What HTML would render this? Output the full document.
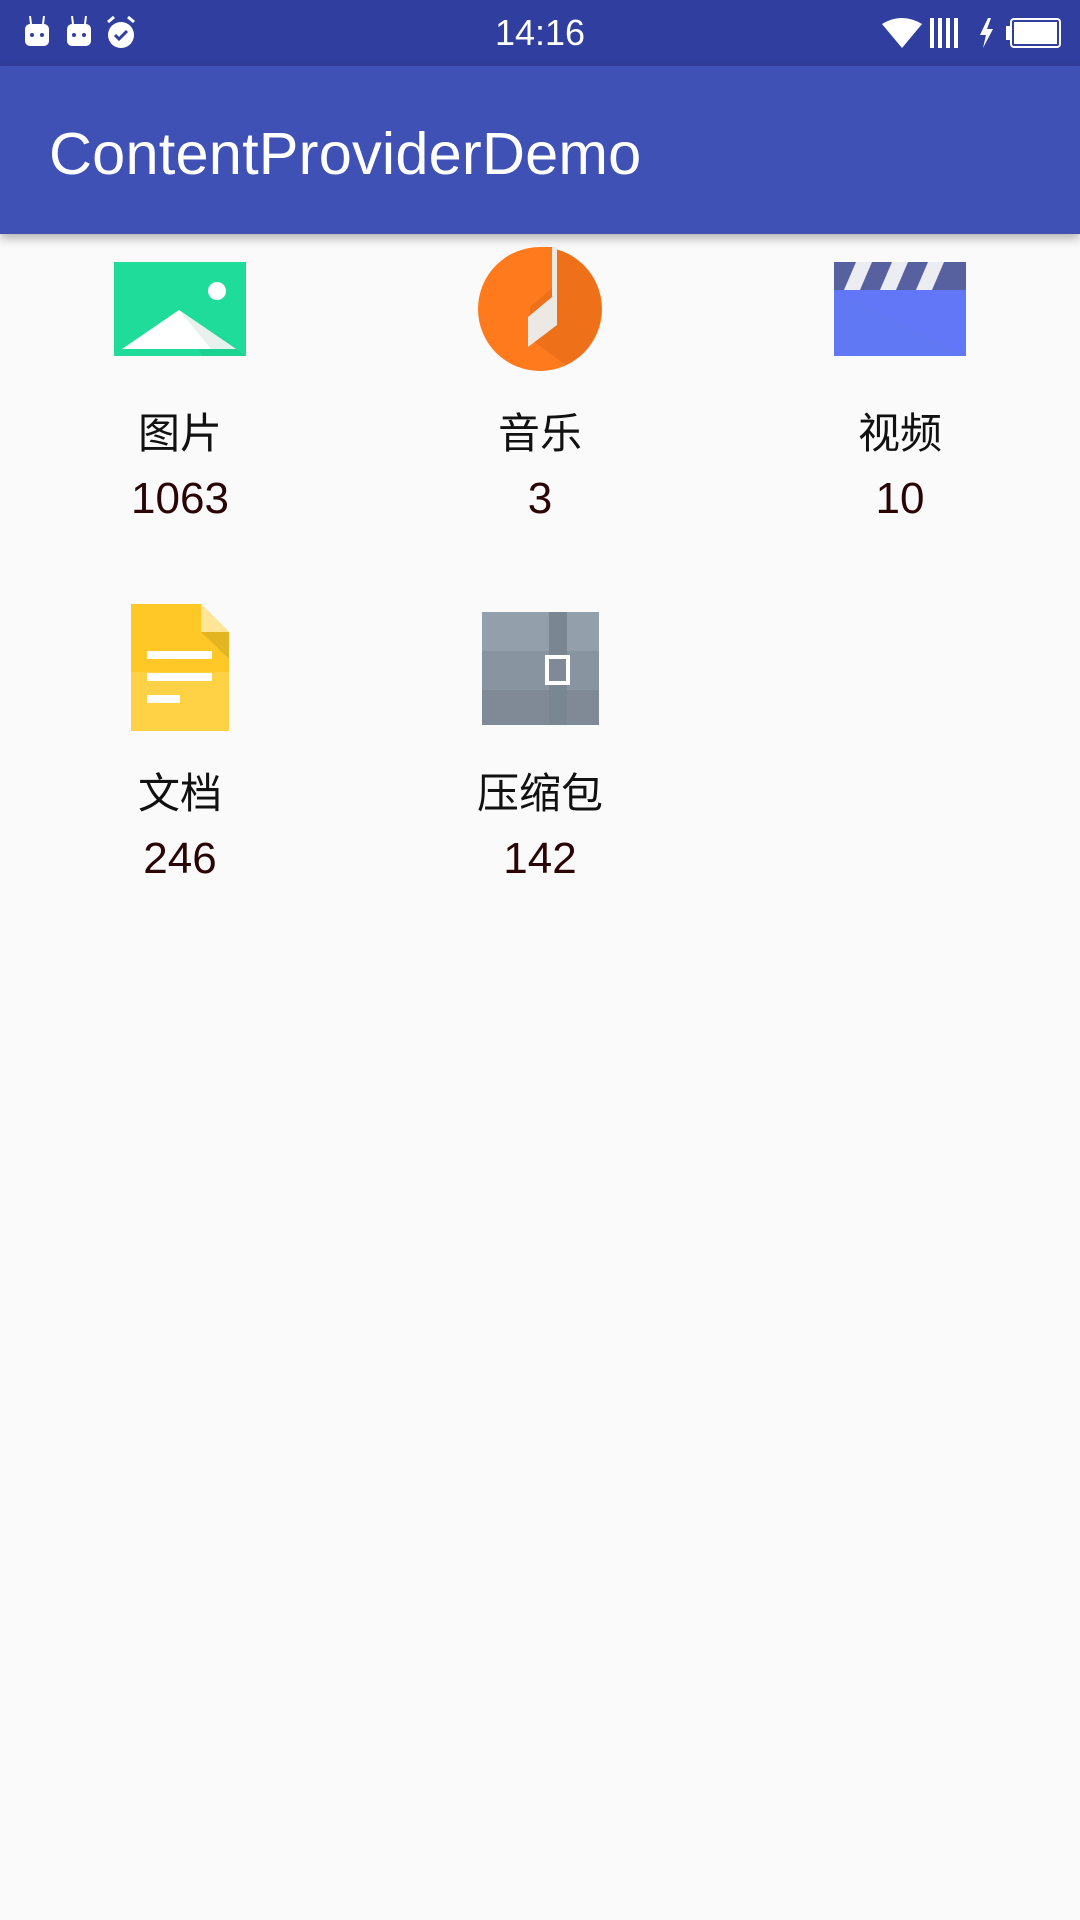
<!DOCTYPE html>
<html><head><meta charset="utf-8"><style>
body{margin:0;width:1080px;height:1920px;background:#fafafa;font-family:"Liberation Sans","Noto Sans CJK SC",sans-serif;position:relative;overflow:hidden}
.sb{position:absolute;left:0;top:0;width:1080px;height:66px;background:#303f9f;color:#fff}
.ab{position:absolute;left:0;top:66px;width:1080px;height:168px;background:#3f51b5;box-shadow:0 4px 10px rgba(0,0,0,.3)}
.t{position:absolute;left:49px;top:118px;font-size:59.5px;color:#fff;line-height:72px;letter-spacing:0.2px}
.lbl{position:absolute;width:300px;text-align:center;font-size:42px;color:#111;line-height:50px}
.num{position:absolute;width:300px;text-align:center;font-size:44px;color:#2b0505;line-height:50px}
svg{position:absolute}
</style></head><body>
<div class="sb">
<div style="position:absolute;left:0;width:1080px;text-align:center;top:12px;font-size:36px">14:16</div>
<svg style="left:24px;top:16px" width="26" height="32"><rect x="1" y="8" width="24" height="22" rx="5" fill="#fff"/><line x1="6" y1="0" x2="7" y2="8" stroke="#fff" stroke-width="2"/><line x1="20" y1="0" x2="19" y2="8" stroke="#fff" stroke-width="2"/><circle cx="8" cy="19" r="2" fill="#303f9f"/><circle cx="18" cy="19" r="2" fill="#303f9f"/></svg>
<svg style="left:66px;top:16px" width="26" height="32"><rect x="1" y="8" width="24" height="22" rx="5" fill="#fff"/><line x1="6" y1="0" x2="7" y2="8" stroke="#fff" stroke-width="2"/><line x1="20" y1="0" x2="19" y2="8" stroke="#fff" stroke-width="2"/><circle cx="8" cy="19" r="2" fill="#303f9f"/><circle cx="18" cy="19" r="2" fill="#303f9f"/></svg>
<svg style="left:106px;top:16px" width="30" height="34"><circle cx="15" cy="19" r="13" fill="#fff"/><path d="M9 19l4 4 8-8" stroke="#303f9f" stroke-width="3" fill="none"/><path d="M2 6l6-5M28 6l-6-5" stroke="#fff" stroke-width="3"/></svg>
<svg style="left:882px;top:18px" width="40" height="30"><path d="M0 6Q20-6 40 6L20 30Z" fill="#fff"/></svg>
<svg style="left:928px;top:18px" width="40" height="30"><rect x="2" y="0" width="4" height="30" fill="#fff"/><rect x="10" y="0" width="4" height="30" fill="#fff"/><rect x="18" y="0" width="4" height="30" fill="#fff"/><rect x="26" y="0" width="4" height="30" fill="#fff"/></svg>
<svg style="left:978px;top:18px" width="20" height="30"><path d="M10 0L2 17h6l-3 13 10-19h-6l4-11z" fill="#fff"/></svg>
<svg style="left:1006px;top:18px" width="56" height="30"><rect x="5" y="1" width="49" height="28" rx="3" stroke="#fff" stroke-width="2" fill="none"/><rect x="8" y="4" width="43" height="22" fill="#fff"/><rect x="0" y="8" width="4" height="14" fill="#fff"/></svg>
</div>
<div class="ab"></div>
<div class="t">ContentProviderDemo</div>

<svg style="left:114px;top:262px" width="132" height="94"><rect width="132" height="94" fill="#20dc9a"/><path d="M65 48L132 94H88Z" fill="#1cc98c" opacity=".6"/><path d="M8 87L65 48 122 87Z" fill="#fff"/><path d="M65 48L122 87H97Z" fill="#e7f2ef"/><circle cx="103" cy="29" r="9" fill="#fff"/></svg>
<svg style="left:478px;top:247px" width="124" height="124"><circle cx="62" cy="62" r="62" fill="#fe7a1d"/><path d="M62 0A62 62 0 0 1 88 118L52 92V60L75 40V0Z" fill="#ee711a"/><path d="M74 0h5v78l-29 22V70l24-20Z" fill="#ece8e4"/></svg>
<svg style="left:834px;top:262px" width="132" height="94"><rect width="132" height="28" fill="#58619f"/><path d="M22 0h16l-12 28H10ZM58 0h16l-12 28H46ZM94 0h16l-12 28H82Z" fill="#ececf3"/><rect y="28" width="132" height="66" fill="#6078f4"/><path d="M0 28L132 94V28Z" fill="#6275fa" opacity=".5"/></svg>
<svg style="left:131px;top:604px" width="98" height="127"><path d="M0 0h70l28 28v99H0Z" fill="#ffd145"/><path d="M0 0h70l28 28v40H0Z" fill="#ffc826"/><path d="M70 0l28 28H70Z" fill="#ffe596"/><path d="M70 28h28v27Z" fill="#e3b621"/><rect x="16" y="47" width="65" height="8" fill="#fff"/><rect x="16" y="69" width="65" height="8" fill="#fff"/><rect x="16" y="91" width="33" height="8" fill="#fff"/></svg>
<svg style="left:482px;top:612px" width="117" height="113"><rect width="117" height="113" fill="#8894a0"/><rect width="117" height="39" fill="#939fab"/><rect y="78" width="117" height="35" fill="#7f8a96"/><rect x="67" width="18" height="113" fill="#7a8692"/><rect x="63" y="43" width="25" height="30" fill="#fff"/><rect x="67" y="47" width="17" height="22" fill="#7f8a96"/></svg>

<div class="lbl" style="left:30px;top:409px">图片</div><div class="num" style="left:30px;top:474px">1063</div>
<div class="lbl" style="left:390px;top:409px">音乐</div><div class="num" style="left:390px;top:474px">3</div>
<div class="lbl" style="left:750px;top:409px">视频</div><div class="num" style="left:750px;top:474px">10</div>
<div class="lbl" style="left:30px;top:769px">文档</div><div class="num" style="left:30px;top:834px">246</div>
<div class="lbl" style="left:390px;top:769px">压缩包</div><div class="num" style="left:390px;top:834px">142</div>
</body></html>
